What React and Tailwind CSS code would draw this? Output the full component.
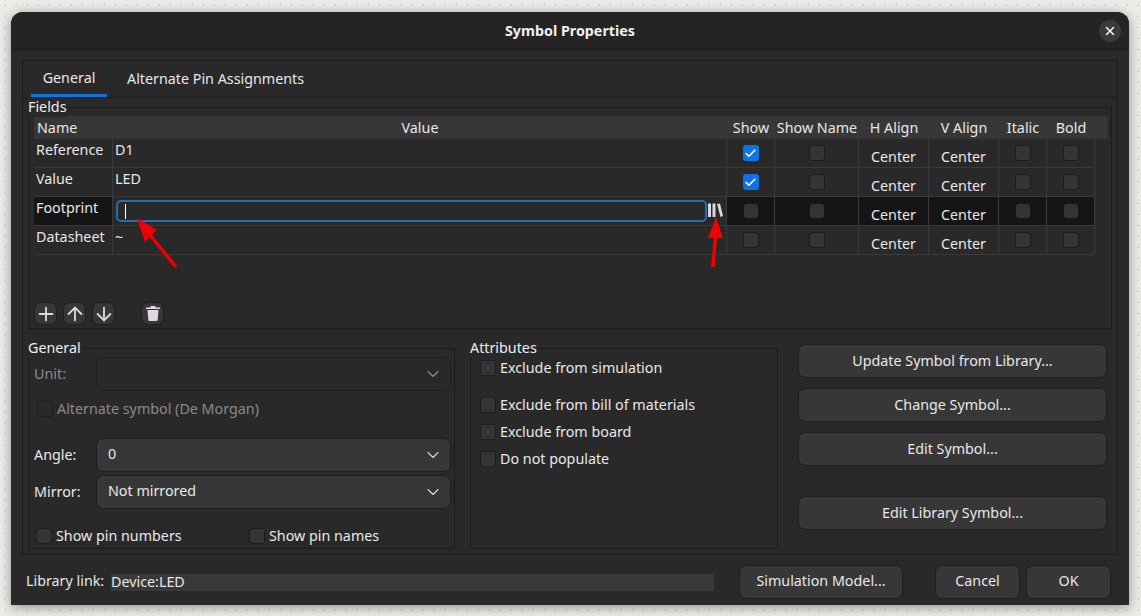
import React from 'react';
import {ArrowDown, ArrowUp, Check, ChevronDown, Plus, X} from 'lucide-react';

const btn = 'flex items-center justify-center rounded-[7px] border border-[#1e1e1e] bg-[#373737] text-[#e8e8e8]';
const columns = 'grid grid-cols-[79px_614px_48px_84px_70px_70px_48px_48px]';

const Checkbox = ({checked, disabled, ghost}) => {
    if (checked) {
        return (
            <span className="flex h-4 w-4 shrink-0 items-center justify-center rounded-[3px] bg-[#0f72e5]">
                <Check size={13} strokeWidth={3} className="text-white"/>
            </span>
        );
    }
    if (ghost) return <span className="block h-[14px] w-[14px] shrink-0 rounded-[3px] bg-[#343434]"/>;
    return (
        <span className={`block h-4 w-4 shrink-0 rounded-[3px] border border-[#1c1c1c] ${disabled ? '' : 'bg-[#353535]'}`}/>
    );
};

const Group = ({title, className, children}) => (
    <div className={`relative border border-[#1b1b1b] ${className}`}>
        <span className="absolute left-[-1px] top-[-11px] bg-[#292929] pr-[1px] leading-[20px] text-[#efefef]">{title}</span>
        {children}
    </div>
);

const rows = [
    {name: 'Reference', value: 'D1', show: true},
    {name: 'Value', value: 'LED', show: true},
    {name: 'Footprint', editing: true},
    {name: 'Datasheet', value: '~'},
];

const BoolCell = ({checked, dark, ghost}) => (
    <div className={`flex justify-center border-r border-[#3a3a3a] ${ghost ? 'pt-[7px]' : 'pt-[6px]'} ${dark ? 'bg-[#151515]' : ''}`}>
        <Checkbox checked={checked} ghost={ghost}/>
    </div>
);

const AlignCell = ({dark}) => (
    <div className={`border-r border-[#3a3a3a] pt-[8px] text-center leading-[20px] ${dark ? 'bg-[#151515]' : ''}`}>Center</div>
);

const FieldRow = ({row}) => {
    const dark = row.editing;
    return (
        <div className={`${columns} h-[29px] border-b border-[#3a3a3a]`}>
            <div className={`border-r border-[#3a3a3a] pl-[2px] pt-[1px] leading-[20px] ${dark ? 'bg-[#151515]' : ''}`}>{row.name}</div>
            <div className="flex border-r border-[#3a3a3a] pl-[2px] pt-[1px] leading-[20px]">
                {row.editing ? (
                    <div className="flex w-full items-start">
                        <div className="ml-[1px] mt-[2px] flex h-[22px] w-[591px] items-center rounded-[5px] border-2 border-[#2a6cb0] pl-[7px]">
                            <span className="h-[15px] w-[1px] bg-white"/>
                        </div>
                        <svg width="15" height="15" viewBox="0 0 15 15" className="ml-[1px] mt-[5px]" fill="#ded6de">
                            <rect x="0" y="0.5" width="3" height="13.5"/>
                            <rect x="4.5" y="0.5" width="3" height="13.5"/>
                            <path d="M9 1 L12 0.5 L15 13 L12.5 14 Z"/>
                        </svg>
                    </div>
                ) : row.value}
            </div>
            <BoolCell checked={row.show} dark={dark} ghost={dark}/>
            <BoolCell dark={dark} ghost={dark}/>
            <AlignCell dark={dark}/>
            <AlignCell dark={dark}/>
            <BoolCell dark={dark} ghost={dark}/>
            <BoolCell dark={dark} ghost={dark}/>
        </div>
    );
};

const Combo = ({label, value, disabled, className}) => (
    <div className={`flex items-center pl-[5px] ${className}`}>
        <span className={`w-[62px] leading-[20px] ${disabled ? 'text-[#8a8a8a]' : ''}`}>{label}</span>
        <div className={`flex h-[34px] w-[355px] items-center justify-between rounded-[7px] border border-[#1e1e1e] pl-[11px] pr-[7px] ${disabled ? '' : 'bg-[#373737]'}`}>
            <span className="pb-[2px]">{value}</span>
            <ChevronDown size={20} strokeWidth={1.3} className={disabled ? 'text-[#8f8f8f]' : 'text-[#d8d8d8]'}/>
        </div>
    </div>
);

const Toggle = ({label, disabled, className}) => (
    <div className={`flex items-center gap-[4px] leading-[16px] ${className}`}>
        <Checkbox disabled={disabled}/>
        <span className={disabled ? 'text-[#8a8a8a]' : ''}>{label}</span>
    </div>
);

const ToolButton = ({className, children}) => (
    <button className={`${btn} h-[23px] w-[23px] ${className}`}>{children}</button>
);

export default function App() {
    return (
        <div className="relative h-[616px] w-[1141px] overflow-hidden bg-[#ecebe7] bg-[radial-gradient(#d2d1cd_1px,transparent_1px)] bg-[size:11px_11px] pl-[11px] pt-[12px] font-['Noto_Sans',sans-serif] text-[14.3px] text-[#e8e8e8]">
            <div className="flex h-[593px] w-[1118px] flex-col rounded-t-[12px] bg-[#292929] shadow-[0_2px_12px_rgba(0,0,0,0.4)]">
                {/* Title bar */}
                <div className="grid h-[38px] shrink-0 grid-cols-[1fr_auto_1fr] items-center rounded-t-[12px] border-b border-[#1b1b1b] bg-[#242424]">
                    <span/>
                    <span className="pt-[1px] font-bold text-[#f0f0f0]">Symbol Properties</span>
                    <button className="mr-[8px] flex h-[22px] w-[22px] items-center justify-center justify-self-end rounded-full bg-[#3b3b3b]">
                        <X size={14} strokeWidth={2.5} className="text-white"/>
                    </button>
                </div>

                <div className="flex flex-col px-[11px] pt-[10px]">
                    {/* Notebook */}
                    <div className="h-[495px] w-[1096px] border border-[#1b1b1b]">
                        <div className="flex h-[37px] border-b border-[#1b1b1b] pl-[8px]">
                            <div className="flex w-[76px] items-center justify-center border-b-[3px] border-[#0f72e5]">General</div>
                            <div className="flex items-center pb-[1px] pl-[20px]">Alternate Pin Assignments</div>
                        </div>

                        <div className="pl-[5px] pt-[9px]">
                            <Group title="Fields" className="h-[222px] w-[1084px]">
                                <div className="ml-[5px] mt-[8px]">
                                    <div className="grid h-[23px] w-[1074px] grid-cols-[79px_614px_48px_84px_70px_70px_48px_48px_13px] items-center bg-[#373737] leading-[20px]">
                                        <span className="pl-[3px]">Name</span>
                                        <span className="text-center">Value</span>
                                        <span className="text-center">Show</span>
                                        <span className="text-center">Show Name</span>
                                        <span className="text-center">H Align</span>
                                        <span className="text-center">V Align</span>
                                        <span className="text-center">Italic</span>
                                        <span className="text-center">Bold</span>
                                    </div>
                                    <div className="w-[1061px]">
                                        {rows.map((row) => <FieldRow key={row.name} row={row}/>)}
                                    </div>
                                    <div className="mt-[47px] flex">
                                        <ToolButton><Plus size={22} strokeWidth={2} className="shrink-0 text-[#e0d8e0]"/></ToolButton>
                                        <ToolButton className="ml-[6px]"><ArrowUp size={22} strokeWidth={2} className="shrink-0 text-[#e0d8e0]"/></ToolButton>
                                        <ToolButton className="ml-[6px]"><ArrowDown size={22} strokeWidth={2} className="shrink-0 text-[#e0d8e0]"/></ToolButton>
                                        <ToolButton className="ml-[26px]">
                                            <svg width="14" height="15" viewBox="0 0 14 15" fill="#e0d8e0">
                                                <path d="M5 0h4l1 1.5h4V3H0V1.500h4z"/>
                                                <path d="M1.500 4h11l-.8 9.500a1.500 1.500 0 0 1-1.500 1.500H3.800a1.500 1.500 0 0 1-1.500-1.500z"/>
                                            </svg>
                                        </ToolButton>
                                    </div>
                                </div>
                            </Group>

                            <div className="mt-[19px] flex">
                                <Group title="General" className="h-[201px] w-[427px]">
                                    <Combo label="Unit:" disabled className="mt-[8px]"/>
                                    <Toggle label="Alternate symbol (De Morgan)" disabled className="ml-[8px] mt-[10px]"/>
                                    <Combo label="Angle:" value="0" className="mt-[21px]"/>
                                    <Combo label="Mirror:" value="Not mirrored" className="mt-[3px]"/>
                                    <div className="ml-[7px] mt-[19px] flex">
                                        <Toggle label="Show pin numbers" className="w-[213px]"/>
                                        <Toggle label="Show pin names"/>
                                    </div>
                                </Group>

                                <Group title="Attributes" className="ml-[15px] h-[201px] w-[308px]">
                                    <Toggle label="Exclude from simulation" className="ml-[9px] mt-[11px]"/>
                                    <Toggle label="Exclude from bill of materials" className="ml-[9px] mt-[21px]"/>
                                    <Toggle label="Exclude from board" className="ml-[9px] mt-[11px]"/>
                                    <Toggle label="Do not populate" className="ml-[9px] mt-[11px]"/>
                                </Group>

                                <div className="ml-[20px] flex w-[309px] flex-col">
                                    <button className={`${btn} mt-[-4px] h-[34px]`}>Update Symbol from Library...</button>
                                    <button className={`${btn} mt-[10px] h-[34px]`}>Change Symbol...</button>
                                    <button className={`${btn} mt-[10px] h-[34px]`}>Edit Symbol...</button>
                                    <button className={`${btn} mt-[30px] h-[34px]`}>Edit Library Symbol...</button>
                                </div>
                            </div>
                        </div>
                    </div>

                    {/* Footer */}
                    <div className="mt-[10px] flex h-[34px] items-center pl-[4px]">
                        <span className="w-[85px] pb-[2px]">Library link:</span>
                        <div className="flex h-[17px] w-[603px] items-center bg-[#383838]">Device:LED</div>
                        <button className={`${btn} ml-[25px] h-[34px] w-[164px] pb-[2px]`}>Simulation Model...</button>
                        <button className={`${btn} ml-[32px] h-[34px] w-[85px] pb-[2px]`}>Cancel</button>
                        <button className={`${btn} ml-[6px] h-[34px] w-[85px] pb-[2px]`}>OK</button>
                    </div>
                </div>
            </div>

            {/* Red annotation arrows drawn on top of the screenshot */}
            <svg className="pointer-events-none absolute left-0 top-0" width="1141" height="616" viewBox="0 0 1141 616">
                <path d="M137 218 L157 230 L145 242 Z" fill="#f00000"/>
                <path d="M150 235 L176 267" stroke="#f00000" strokeWidth="3.500" fill="none"/>
                <path d="M716 217 L708 238 L723 238 Z" fill="#f00000"/>
                <path d="M715.500 236 L713 267" stroke="#f00000" strokeWidth="3.500" fill="none"/>
            </svg>
        </div>
    );
}
